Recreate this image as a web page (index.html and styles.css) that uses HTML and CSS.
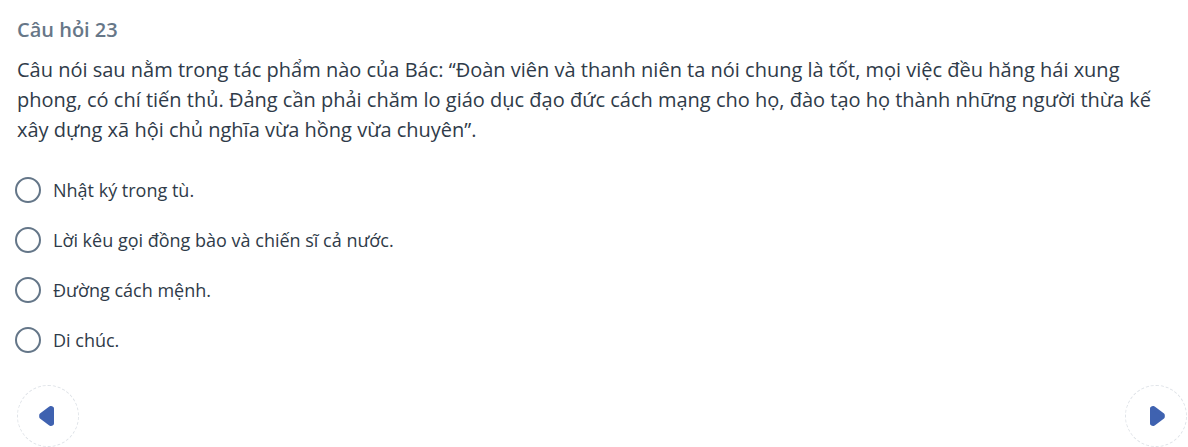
FILE: index.html
```html
<!DOCTYPE html>
<html lang="vi">
<head>
<meta charset="utf-8">
<meta name="viewport" content="width=device-width, initial-scale=1">
<title>Câu hỏi 23</title>
<link rel="stylesheet" href="styles.css">
</head>
<body>
<main class="quiz">
  <h1 class="quiz-number">Câu hỏi 23</h1>
  <p class="quiz-question" id="question">Câu nói sau nằm trong tác phẩm nào của Bác: “Đoàn viên và thanh niên ta nói chung là tốt, mọi việc đều hăng hái xung phong, có chí tiến thủ. Đảng cần phải chăm lo giáo dục đạo đức cách mạng cho họ, đào tạo họ thành những người thừa kế xây dựng xã hội chủ nghĩa vừa hồng vừa chuyên”.</p>
  <div class="quiz-options" role="radiogroup" aria-labelledby="question">
    <label class="option"><input class="option-input" type="radio" name="answer" value="a"><span>Nhật ký trong tù.</span></label>
    <label class="option"><input class="option-input" type="radio" name="answer" value="b"><span>Lời kêu gọi đồng bào và chiến sĩ cả nước.</span></label>
    <label class="option"><input class="option-input" type="radio" name="answer" value="c"><span>Đường cách mệnh.</span></label>
    <label class="option"><input class="option-input" type="radio" name="answer" value="d"><span>Di chúc.</span></label>
  </div>
  <nav class="quiz-nav">
    <button class="nav-button" type="button" aria-label="Câu trước"><svg class="nav-icon" width="18" height="22" viewBox="0 0 18 22"><path d="M11.500 3L13 3.500V18.500L11.500 19L2.200 11.800V10.200Z"/></svg></button>
    <button class="nav-button" type="button" aria-label="Câu sau"><svg class="nav-icon" width="18" height="22" viewBox="0 0 18 22"><path d="M6.500 3L5 3.500V18.500L6.500 19L15.800 11.800V10.200Z"/></svg></button>
  </nav>
</main>
</body>
</html>
```
FILE: styles.css
```css
* {
  box-sizing: border-box;
}

body {
  margin: 0;
  background: #fff;
  color: #2f3b49;
  font-family: "Open Sans", sans-serif;
}

.quiz {
  padding: 15px 1px 0 17px;
}

.quiz-number {
  margin: 0 0 10px;
  color: #677788;
  font-size: 20px;
  font-weight: 600;
  line-height: 30px;
}

.quiz-question {
  margin: 0 20px 20px 0;
  font-size: 20px;
  line-height: 30px;
}

.quiz-options {
  margin-left: -2px;
}

.option {
  display: flex;
  align-items: center;
  gap: 12px;
  min-height: 50px;
  font-size: 18px;
  line-height: 26px;
}

.option-input {
  appearance: none;
  flex: none;
  width: 26px;
  height: 26px;
  margin: 0;
  border: 2px solid #647688;
  border-radius: 50%;
}

.option-input:checked {
  background: radial-gradient(#3b62b0 45%, #fff 50%);
}

.quiz-nav {
  display: flex;
  justify-content: space-between;
  margin-top: 20px;
}

.nav-button {
  display: grid;
  place-items: center;
  width: 62px;
  height: 62px;
  padding: 0;
  border: 1px dashed #dfe3e8;
  border-radius: 50%;
  background: #fff;
}

.nav-icon {
  fill: #3f62b0;
  stroke: #3f62b0;
  stroke-width: 4px;
  stroke-linejoin: round;
}
```
